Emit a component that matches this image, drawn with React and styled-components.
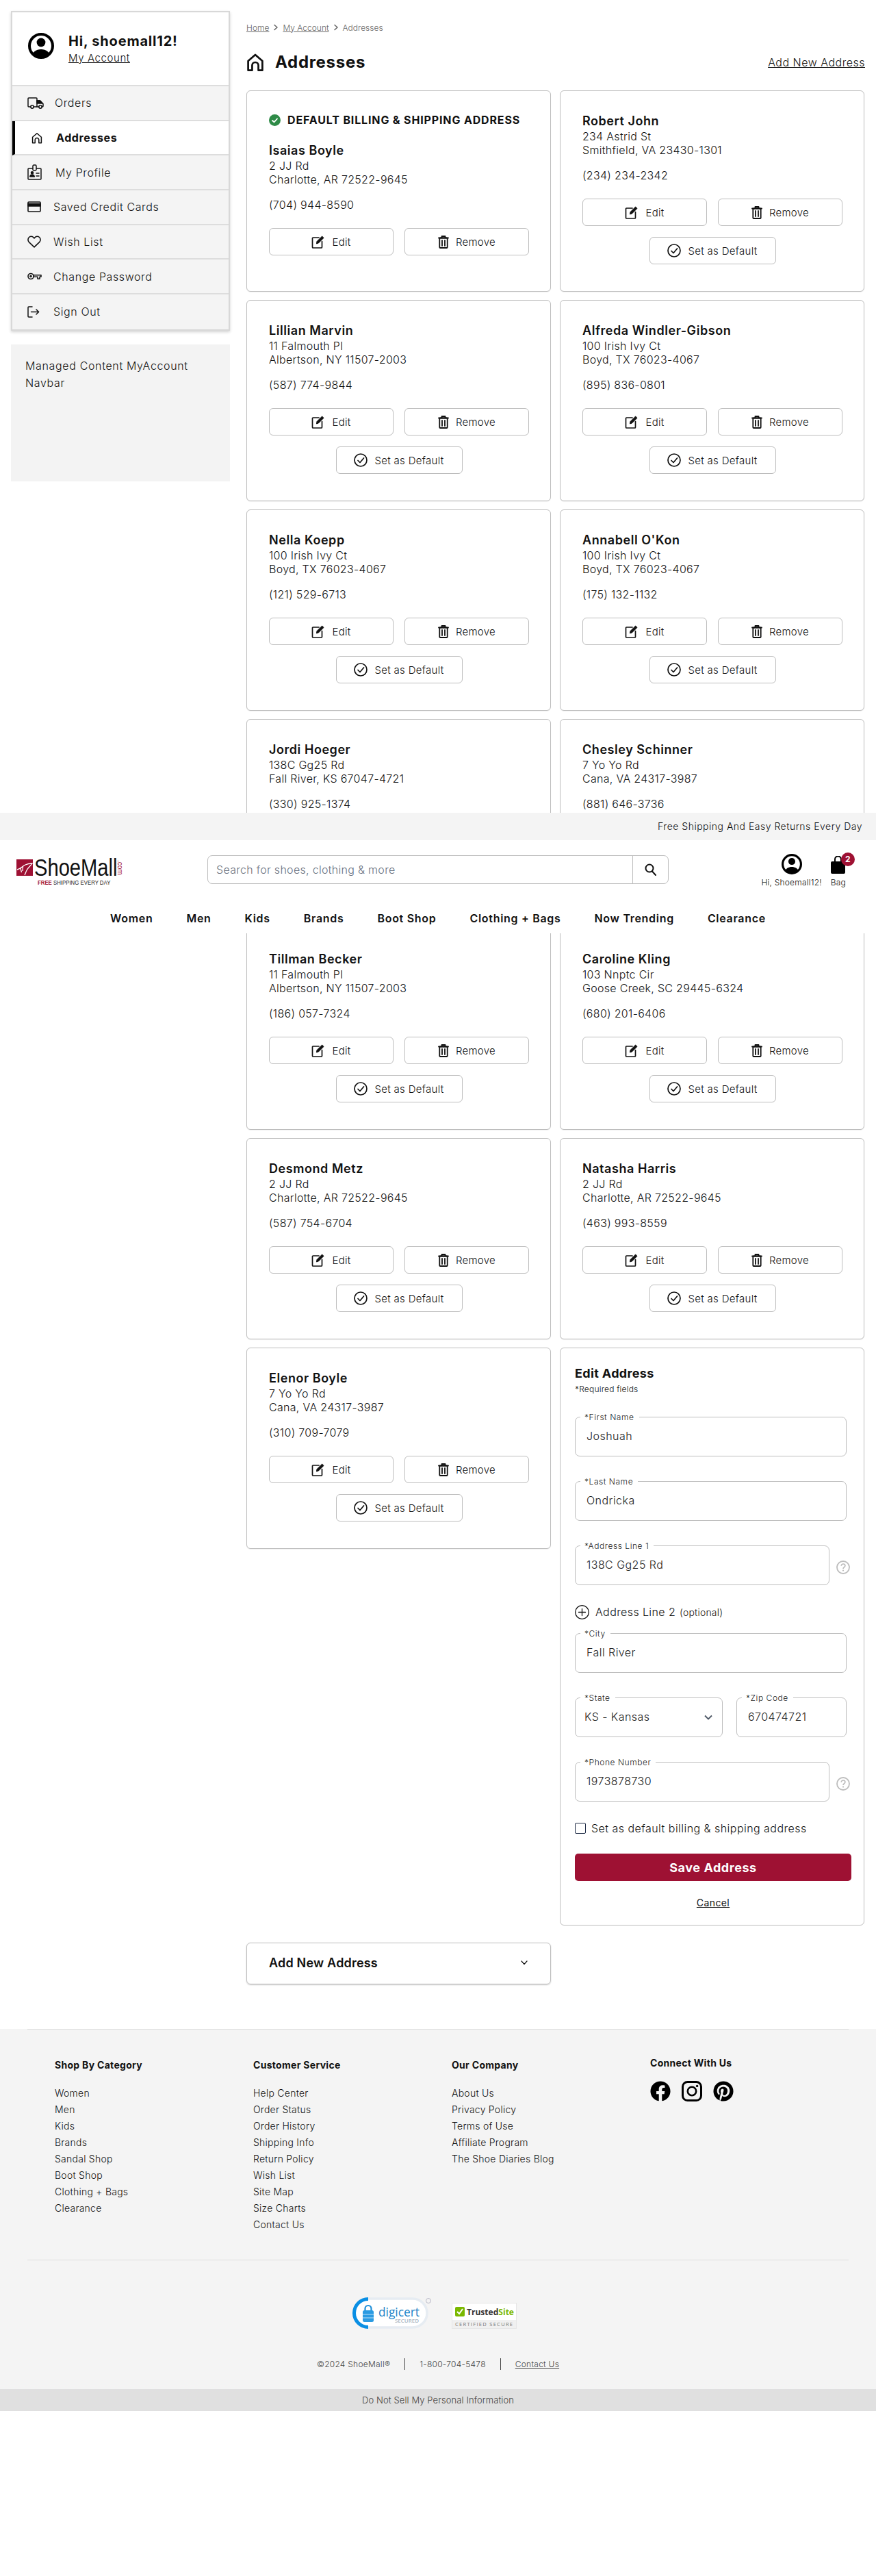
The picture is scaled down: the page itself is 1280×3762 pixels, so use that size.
import React from "react";
import styled, { createGlobalStyle } from "styled-components";
import { FaFacebook, FaPinterest } from "react-icons/fa";

const Global = createGlobalStyle`
  html, body { margin: 0; padding: 0; background: #fff; }
  body { font-family: Inter, "Liberation Sans", sans-serif; color: #111; font-size: 16px; }
  * { box-sizing: border-box; }
  a { color: inherit; }
`;

const Page = styled.div`position: relative; width: 1280px; height: 3762px; overflow: hidden;`;
const Layout = styled.div`display: flex; gap: 24px; padding: 16px 16px 0;`;
const Side = styled.aside`width: 320px; flex: none;`;
const SideBox = styled.nav`border: 2px solid #d8d8d8; box-shadow: 0 2px 4px rgba(0,0,0,.18); background: #f4f4f4;`;
const SideHead = styled.div`height: 108px; background: #fff; display: flex; align-items: flex-start; padding: 30px 0 0 23px; gap: 21px; border-bottom: 2px solid #ddd;`;
const Hello = styled.div`font-weight: 700; font-size: 20px; line-height: 24px; letter-spacing: .8px;`;
const MyLink = styled.a`display: block; font-size: 15px; line-height: 20px; margin-top: 3px; text-decoration: underline; letter-spacing: .6px; font-weight: 300;`;
const SideItem = styled.a`
  height: 50.7px; display: flex; align-items: center; border-bottom: 2px solid #ddd;
  padding-left: ${p => p.$active ? 24 : 22}px; font-size: 16px; letter-spacing: .6px;
  background: ${p => p.$active ? "#fff" : "#f4f4f4"};
  font-weight: ${p => p.$active ? 700 : 300};
  border-left: ${p => p.$active ? "4px solid #000" : "0"};
  &:last-child { border-bottom: 0; }
`;
const SideIcon = styled.span`width: ${p => p.$w}px; display: flex; flex: none;`;
const Managed = styled.div`margin-top: 20px; height: 200px; background: #f3f3f3; padding: 19px 21px; font-size: 16px; font-weight: 300; line-height: 25px; letter-spacing: .65px;`;

const Main = styled.main`flex: 1; min-width: 0;`;
const Crumbs = styled.div`display: flex; align-items: center; font-size: 12px; letter-spacing: 0; color: #666; height: 16px; margin-top: 16px; gap: 5px; font-weight: 300;`;
const CrumbLink = styled.a`text-decoration: underline;`;
const TitleRow = styled.div`display: flex; align-items: center; height: 32px; margin-top: 27px; margin-bottom: 25px;`;
const Title = styled.h1`margin: 0 0 0 16px; font-size: 24px; font-weight: 700; letter-spacing: .7px; line-height: 32px;`;
const AddLink = styled.a`margin-left: auto; font-size: 16px; font-weight: 300; text-decoration: underline; letter-spacing: .5px;`;
const Grid = styled.div`display: grid; grid-template-columns: 445px 445px; column-gap: 13px; row-gap: 12px; align-items: start;`;
const Card = styled.section`
  border: 1px solid #bdbdbd; border-radius: 6px; background: #fff; min-height: 294px;
  padding: 32px 32px 0; box-shadow: 0 1px 1px rgba(0,0,0,.06);
`;
const DefaultBanner = styled.div`display: flex; align-items: center; gap: 10px; height: 20px; margin-bottom: 23px; font-size: 16px; font-weight: 700; letter-spacing: .85px;`;
const Name = styled.div`font-size: 18px; line-height: 24px; font-weight: 600; letter-spacing: .55px;`;
const Line = styled.div`font-size: 16px; line-height: 20px; letter-spacing: .3px; font-weight: 300;`;
const Phone = styled(Line)`margin-top: 17px;`;
const Buttons = styled.div`display: flex; flex-wrap: wrap; justify-content: center; gap: 16px; width: 380px; margin-top: 24px;`;
const Btn = styled.button`
  width: ${p => p.$w || 182}px; height: 40px; background: #fff; border: 1px solid #bdbdbd; border-radius: 6px;
  display: flex; align-items: center; justify-content: center; gap: ${p => p.$gap || 10}px; font: inherit; font-size: 15px; font-weight: 300; letter-spacing: .3px; color: #111; padding: 0;
`;

const FormCard = styled.section`
  border: 1px solid #bdbdbd; border-radius: 6px; padding: 25px 19px 0 21px; height: 844px; background: #fff;
`;
const FormTitle = styled.h2`margin: 0; font-size: 18px; line-height: 24px; font-weight: 700; letter-spacing: .35px;`;
const Req = styled.div`font-size: 12px; font-weight: 300; line-height: 16px; margin-top: 3px; margin-bottom: 32px; letter-spacing: .2px;`;
const Row = styled.div`display: flex; align-items: flex-start; gap: ${p => p.$gap || 10}px; margin-bottom: ${p => p.$mb ?? 36}px;`;
const Field = styled.label`
  position: relative; display: flex; align-items: center; height: 58px; width: ${p => p.$w}px; border: 1px solid #bdbdbd; border-radius: 7px; flex: none;
`;
const Legend = styled.span`position: absolute; left: 7px; top: -8px; background: #fff; padding: 0 7px 0 6px; font-size: 12px; font-weight: 300; line-height: 16px; letter-spacing: .55px; color: #222;`;
const Input = styled.input`
  border: 0; outline: 0; background: none; width: 100%; height: 100%; padding: 0 0 3px 16px; font: inherit; font-size: 16px; font-weight: 300; letter-spacing: .45px; color: #222;
`;
const Select = styled(Input).attrs({ as: "select" })`appearance: none; -webkit-appearance: none; padding-left: 13px;`;
const Chevron = styled.svg`position: absolute; right: 14px; top: 24px; pointer-events: none;`;
const Help = styled.svg`margin-top: 22px; flex: none;`;
const AddLine = styled.div`display: flex; align-items: center; gap: 9px; height: 24px; margin: 27px 0 19px; font-size: 16px; font-weight: 300; letter-spacing: .4px; `;
const Optional = styled.span`font-size: 14px; margin-left: 1px; letter-spacing: .2px;`;
const CheckRow = styled.label`display: flex; align-items: center; gap: 8px; height: 20px; margin-top: -7px; font-size: 16px; font-weight: 300; letter-spacing: .46px;`;
const Box = styled.span`width: 16px; height: 16px; border: 1px solid #1c2a44; border-radius: 2px; flex: none;`;
const Save = styled.button`
  display: block; width: 404px; height: 40px; margin-top: 27px; background: #9e1133; color: #fff; border: 0; border-radius: 5px;
  font: inherit; font-size: 18px; font-weight: 700; letter-spacing: .55px;
`;
const Cancel = styled.a`display: block; width: 50px; margin: 22px 0 0 177px; text-align: center; font-size: 14px; line-height: 20px; letter-spacing: .4px; text-decoration: underline;`;

const AddCard = styled.section`
  grid-column: 1; margin-top: 13px; height: 61px; border: 1px solid #bdbdbd; border-radius: 6px; display: flex; align-items: center; justify-content: space-between;
  padding: 0 33px 3px 32px; font-size: 18px; font-weight: 600; letter-spacing: .2px; box-shadow: 0 1px 2px rgba(0,0,0,.2);
`;

const Sticky = styled.header`position: absolute; left: 0; right: 0; top: 1187px; height: 176px; background: #fff;`;
const Promo = styled.div`height: 40px; background: #f4f4f4; display: flex; align-items: center; justify-content: flex-end; padding: 0 20px 2px 0; font-size: 14px; font-weight: 300; letter-spacing: .5px;`;
const HeadRow = styled.div`display: flex; align-items: flex-start; height: 102px; padding: 20px 44px 0 24px;`;
const LogoWrap = styled.a`display: block; width: 155px; height: 42px; margin-top: 6px; flex: none;`;
const Search = styled.form`display: flex; width: 674px; height: 42px; margin: 2px 0 0 124px; border: 1px solid #bdbdbd; border-radius: 7px; flex: none;`;
const SearchInput = styled.input`flex: 1; border: 0; outline: 0; background: none; padding: 0 12px; font: inherit; font-size: 16px; font-weight: 300; letter-spacing: .3px; &::placeholder { color: #6b7280; opacity: 1; }`;
const SearchBtn = styled.button`width: 52px; border: 0; border-left: 1px solid #bdbdbd; background: none; display: flex; align-items: center; justify-content: center; padding: 0;`;
const Tools = styled.div`margin-left: auto; display: flex; gap: 13px;`;
const Tool = styled.a`position: relative; display: flex; flex-direction: column; align-items: center; height: 50px; justify-content: space-between; font-size: 12px; font-weight: 300; line-height: 16px; letter-spacing: .2px; white-space: nowrap;`;
const Badge = styled.span`position: absolute; top: -2px; left: 15px; width: 20px; height: 20px; border-radius: 50%; background: #9e1133; color: #fff; font-size: 12px; font-weight: 700; display: flex; align-items: center; justify-content: center;`;
const MainNav = styled.nav`display: flex; justify-content: center; gap: 49px; font-size: 16px; font-weight: 600; line-height: 24px; letter-spacing: .7px;`;

const Foot = styled.footer`margin-top: 65px; background: #f4f4f4;`;
const FootTop = styled.div`margin: 0 40px; border-top: 1px solid #ddd; border-bottom: 1px solid #ddd; padding: 42px 0 39px 40px; display: grid; grid-template-columns: repeat(4, 290px);`;
const FootHead = styled.h3`margin: ${p => p.$up ? "-3px" : 0} 0 19px; font-size: 14px; line-height: 20px; font-weight: 700; letter-spacing: .3px;`;
const FootList = styled.ul`list-style: none; margin: 0; padding: 0; font-size: 14px; font-weight: 300; line-height: 24px; letter-spacing: .25px;`;
const Social = styled.div`display: flex; gap: 16px; margin-top: -3px;`;
const Seals = styled.div`display: flex; align-items: flex-end; justify-content: center; gap: 30px; padding: 54px 10px 0 0; `;
const Legal = styled.div`display: flex; align-items: center; justify-content: center; gap: 21px; height: 17px; margin-top: 43px; font-size: 12px; font-weight: 300; color: #444; letter-spacing: .25px;`;
const Sep = styled.span`width: 1px; height: 17px; background: #444;`;
const Under = styled.a`text-decoration: underline;`;
const Band = styled.div`margin-top: 28px; height: 32px; background: #e0e0e0; display: flex; align-items: center; justify-content: center; font-size: 13px; font-weight: 300; color: #444; letter-spacing: .1px;`;

const Stroke = ({ w, h, vb, sw = 1.6, children, color = "currentColor" }) => (
  <svg width={w} height={h} viewBox={vb} fill="none" stroke={color} strokeWidth={sw} strokeLinecap="round" strokeLinejoin="round">{children}</svg>
);

const EditIcon = () => (
  <Stroke w={20} h={20} vb="0 0 20 20" sw={1.7}>
    <path d="M11 4H2.500a1 1 0 0 0-1 1v13a1 1 0 0 0 1 1h12a1 1 0 0 0 1-1V9.500" />
    <path d="M7.500 12.500l.6-3L15.600 2l2.400 2.400-7.500 7.500z" fill="currentColor" strokeWidth="1" />
  </Stroke>
);
const TrashIcon = () => (
  <Stroke w={16} h={19} vb="0 0 16 19" sw={1.8}>
    <path d="M1 3.500h14M5.500 3V1h5v2" />
    <rect x="2.300" y="3.500" width="11.400" height="14.500" rx="1" />
    <path d="M6 7v8M10 7v8" />
  </Stroke>
);
const CheckCircle = () => (
  <Stroke w={20} h={20} vb="0 0 20 20" sw={1.7}>
    <circle cx="10" cy="10" r="9" />
    <path d="M6 10.500l3 3 5.500-6.500" />
  </Stroke>
);
const GreenCheck = () => (
  <svg width="17" height="17" viewBox="0 0 17 17"><circle cx="8.500" cy="8.500" r="8.500" fill="#2e8b47" /><path d="M5 9l2.500 2.300L12 6.500" fill="none" stroke="#fff" strokeWidth="1.800" strokeLinecap="round" strokeLinejoin="round" /></svg>
);
const Avatar = ({ s }) => (
  <svg width={s} height={s} viewBox="0 0 38 38">
    <defs><clipPath id={`av${s}`}><circle cx="19" cy="19" r="17" /></clipPath></defs>
    <circle cx="19" cy="19" r="17" fill="#fff" stroke="#000" strokeWidth="4" />
    <circle cx="19" cy="14" r="6.400" fill="#000" />
    <path d="M5 38c0-9 6-14 14-14s14 5 14 14z" fill="#000" clipPath={`url(#av${s})`} />
  </svg>
);
const House = ({ w, h, sw }) => (
  <Stroke w={w} h={h} vb="0 0 20 20" sw={sw}>
    <path d="M2 19V8.500L10 1.500l8 7V19h-4.500v-5.500a3.500 3.500 0 0 0-7 0V19z" />
  </Stroke>
);
const Truck = () => (
  <Stroke w={24} h={17} vb="0 0 24 17" sw={1.5}>
    <path d="M5 14H2a1 1 0 0 1-1-1V2a1 1 0 0 1 1-1h11a1 1 0 0 1 1 1v12H9" />
    <path d="M14 5h4.500L23 9.500V13a1 1 0 0 1-1 1h-1" />
    <path d="M14 5h4.500L22 9h-8z" fill="currentColor" />
    <circle cx="7" cy="14" r="2.200" /><circle cx="19" cy="14" r="2.200" /><path d="M14 14h3" />
  </Stroke>
);
const Badge2 = () => (
  <Stroke w={21} h={23} vb="0 0 21 23" sw={1.5}>
    <path d="M7.500 6H2a1 1 0 0 0-1 1v14a1 1 0 0 0 1 1h17a1 1 0 0 0 1-1V7a1 1 0 0 0-1-1h-5.500" />
    <rect x="8" y="1" width="5" height="8" rx="1.400" />
    <circle cx="7" cy="12.300" r="1.600" fill="currentColor" />
    <path d="M3.700 18c.3-2 1.600-2.700 3.300-2.700s3 .7 3.300 2.700z" fill="currentColor" /><path d="M13 13h4M13 17h4" />
  </Stroke>
);
const CardIcon = () => (
  <Stroke w={20} h={16} vb="0 0 20 16" sw={1.6}>
    <rect x="1" y="1" width="18" height="14" rx="1" /><rect x="1" y="3.500" width="18" height="3.500" fill="currentColor" />
  </Stroke>
);
const Heart = () => (
  <Stroke w={20} h={18} vb="0 0 20 18" sw={1.6}>
    <path d="M10 16.800L2.400 9.600C.4 7.600.5 4.400 2.500 2.500c2-1.800 5-1.500 6.600.4l.9 1 .9-1c1.600-1.900 4.600-2.200 6.600-.4 2 1.900 2.100 5.100.1 7.100z" />
  </Stroke>
);
const Key = () => (
  <Stroke w={21} h={11} vb="0 0 21 11" sw={1.6}>
    <circle cx="5" cy="5.500" r="4" /><circle cx="5" cy="5.500" r="1" /><path d="M9 3.700h11v2.600h-2v3h-3v-3H9" />
  </Stroke>
);
const SignOut = () => (
  <Stroke w={18} h={17} vb="0 0 18 17" sw={1.5}>
    <path d="M7 1H2a1 1 0 0 0-1 1v13a1 1 0 0 0 1 1h5" /><path d="M5.500 8.500h11M13 5l3.600 3.500L13 12" />
  </Stroke>
);
const HelpIcon = () => (
  <Help width="20" height="20" viewBox="0 0 20 20"><circle cx="10" cy="10" r="9" fill="none" stroke="#bdbdbd" strokeWidth="1.800" /><path d="M7.200 7.800c0-1.700 1.300-2.800 2.900-2.800 1.500 0 2.800 1 2.800 2.500 0 2.200-2.900 2.200-2.900 4.400" fill="none" stroke="#bdbdbd" strokeWidth="1.700" /><circle cx="10" cy="14.600" r="1.100" fill="#bdbdbd" /></Help>
);
const Instagram = () => (
  <svg width="30" height="30" viewBox="0 0 30 30" fill="none" stroke="#000"><rect x="1.500" y="1.500" width="27" height="27" rx="7" strokeWidth="3" /><circle cx="15" cy="15" r="6.200" strokeWidth="2.600" /><circle cx="22.600" cy="7.400" r="1.700" fill="#000" stroke="none" /></svg>
);

const Logo = () => (
  <svg width="155" height="42" viewBox="0 0 155 42" style={{ overflow: "visible" }}>
    <rect x="0" y="2" width="24" height="24" fill="#9e1133" />
    <path d="M1 17c5-1 8-5 12-7 3-1.500 7-2 10-2-2 3-6 6-8 10-1 2-2 5-3 7M6 15l1.500 6M9.500 13l-.5 6" fill="none" stroke="#fff" strokeWidth="1.300" />
    <text transform="translate(26 26) scale(.81 1)" fontFamily="'Liberation Sans', sans-serif" fontSize="36" fill="#111">ShoeMall</text>
    <text transform="translate(148 3) rotate(90)" fontFamily="'Liberation Sans', sans-serif" fontSize="10" fill="#9e1133">.com</text>
    <text transform="translate(31 38.500) scale(.92 1)" fontFamily="'Liberation Sans', sans-serif" fontSize="8.500" fill="#222"><tspan fill="#9e1133" fontWeight="700">FREE</tspan> SHIPPING EVERY DAY</text>
  </svg>
);
const Digicert = () => (
  <svg width="115" height="46" viewBox="0 0 115 46">
    <rect x="3" y="2" width="106" height="42" rx="21" fill="#fff" stroke="#e6ecf2" strokeWidth="3.500" />
    <path d="M23 2.500A20.500 20.500 0 0 0 23 43.500" fill="none" stroke="#0a8fe4" strokeWidth="5" />
    <path d="M18.500 20v-3.500a4.500 4.500 0 0 1 9 0V20" fill="none" stroke="#1f8fd8" strokeWidth="2.200" />
    <rect x="15" y="19" width="16" height="17" rx="2.500" fill="#2b9be2" />
    <path d="M15 25h16M15 30h16" stroke="#bfe2f8" strokeWidth="1" />
    <text x="38" y="28" fontFamily="'Open Sans', sans-serif" fontSize="18" fill="#1b84c8" textLength="60" lengthAdjust="spacingAndGlyphs">digicert</text>
    <text x="62" y="37" fontFamily="'Open Sans', sans-serif" fontSize="7" fontWeight="600" fill="#a8b4be" textLength="35" lengthAdjust="spacingAndGlyphs">SECURED</text>
    <circle cx="111" cy="5" r="3.500" fill="#f4f4f4" stroke="#aab" strokeWidth=".8" />
  </svg>
);
const Trusted = () => (
  <svg width="95" height="38" viewBox="0 0 95 38">
    <rect x=".5" y=".5" width="94" height="37" fill="#fff" stroke="#e6e6e6" />
    <rect x="1" y="25" width="93" height="12" fill="#f0f0f0" />
    <rect x="5" y="6" width="14" height="14" rx="2" fill="#7ab800" />
    <path d="M8 13l3 3 5-7" fill="none" stroke="#fff" strokeWidth="2" />
    <text x="22" y="18" fontFamily="'Open Sans', sans-serif" fontSize="13" fontWeight="700" fill="#333" textLength="69" lengthAdjust="spacingAndGlyphs">Trusted<tspan fill="#7ab800">Site</tspan></text>
    <text x="5" y="34" fontFamily="'Open Sans', sans-serif" fontSize="7.500" fill="#777" textLength="84" lengthAdjust="spacing">CERTIFIED SECURE</text>
  </svg>
);

const addresses = [
  ["Isaias Boyle", "2 JJ Rd", "Charlotte, AR 72522-9645", "(704) 944-8590", true],
  ["Robert John", "234 Astrid St", "Smithfield, VA 23430-1301", "(234) 234-2342"],
  ["Lillian Marvin", "11 Falmouth Pl", "Albertson, NY 11507-2003", "(587) 774-9844"],
  ["Alfreda Windler-Gibson", "100 Irish Ivy Ct", "Boyd, TX 76023-4067", "(895) 836-0801"],
  ["Nella Koepp", "100 Irish Ivy Ct", "Boyd, TX 76023-4067", "(121) 529-6713"],
  ["Annabell O'Kon", "100 Irish Ivy Ct", "Boyd, TX 76023-4067", "(175) 132-1132"],
  ["Jordi Hoeger", "138C Gg25 Rd", "Fall River, KS 67047-4721", "(330) 925-1374"],
  ["Chesley Schinner", "7 Yo Yo Rd", "Cana, VA 24317-3987", "(881) 646-3736"],
  ["Tillman Becker", "11 Falmouth Pl", "Albertson, NY 11507-2003", "(186) 057-7324"],
  ["Caroline Kling", "103 Nnptc Cir", "Goose Creek, SC 29445-6324", "(680) 201-6406"],
  ["Desmond Metz", "2 JJ Rd", "Charlotte, AR 72522-9645", "(587) 754-6704"],
  ["Natasha Harris", "2 JJ Rd", "Charlotte, AR 72522-9645", "(463) 993-8559"],
  ["Elenor Boyle", "7 Yo Yo Rd", "Cana, VA 24317-3987", "(310) 709-7079"],
];

const AddressCard = ({ a }) => (
  <Card>
    {a[4] && <DefaultBanner><GreenCheck />DEFAULT BILLING &amp; SHIPPING ADDRESS</DefaultBanner>}
    <Name>{a[0]}</Name>
    <Line>{a[1]}</Line>
    <Line>{a[2]}</Line>
    <Phone>{a[3]}</Phone>
    <Buttons>
      <Btn><EditIcon />Edit</Btn>
      <Btn><TrashIcon />Remove</Btn>
      {!a[4] && <Btn $w={185}><CheckCircle />Set as Default</Btn>}
    </Buttons>
  </Card>
);

const TextField = ({ label, value, w }) => (
  <Field $w={w}><Legend>{label}</Legend><Input readOnly value={value} /></Field>
);

const sideItems = [
  [<Truck />, "Orders", 40],
  [<House w={16} h={17} sw={1.9} />, "Addresses", 36, true],
  [<Badge2 />, "My Profile", 41],
  [<CardIcon />, "Saved Credit Cards", 38],
  [<Heart />, "Wish List", 38],
  [<Key />, "Change Password", 38],
  [<SignOut />, "Sign Out", 38],
];

const footerCols = [
  ["Shop By Category", ["Women", "Men", "Kids", "Brands", "Sandal Shop", "Boot Shop", "Clothing + Bags", "Clearance"]],
  ["Customer Service", ["Help Center", "Order Status", "Order History", "Shipping Info", "Return Policy", "Wish List", "Site Map", "Size Charts", "Contact Us"]],
  ["Our Company", ["About Us", "Privacy Policy", "Terms of Use", "Affiliate Program", "The Shoe Diaries Blog"]],
];

export default function App() {
  return (
    <Page>
      <Global />
      <Layout>
        <Side>
          <SideBox>
            <SideHead>
              <Avatar s={38} />
              <div><Hello>Hi, shoemall12!</Hello><MyLink>My Account</MyLink></div>
            </SideHead>
            {sideItems.map(([ic, t, w, act]) => (
              <SideItem key={t} $active={act}><SideIcon $w={w}>{ic}</SideIcon>{t}</SideItem>
            ))}
          </SideBox>
          <Managed>Managed Content MyAccount Navbar</Managed>
        </Side>
        <Main>
          <Crumbs>
            <CrumbLink>Home</CrumbLink>
            <Stroke w={10} h={10} vb="0 0 10 10"><path d="M3 1.500L7 5 3 8.500" /></Stroke>
            <CrumbLink>My Account</CrumbLink>
            <Stroke w={10} h={10} vb="0 0 10 10"><path d="M3 1.500L7 5 3 8.500" /></Stroke>
            <span>Addresses</span>
          </Crumbs>
          <TitleRow>
            <House w={26} h={28} sw={2.100} />
            <Title>Addresses</Title>
            <AddLink>Add New Address</AddLink>
          </TitleRow>
          <Grid>
            {addresses.map(a => <AddressCard key={a[0]} a={a} />)}
            <FormCard>
              <FormTitle>Edit Address</FormTitle>
              <Req>*Required fields</Req>
              <Row><TextField label="*First Name" value="Joshuah" w={397} /></Row>
              <Row><TextField label="*Last Name" value="Ondricka" w={397} /></Row>
              <Row $mb={0}><TextField label="*Address Line 1" value="138C Gg25 Rd" w={372} /><HelpIcon /></Row>
              <AddLine>
                <Stroke w={21} h={21} vb="0 0 21 21" sw={1.300}><circle cx="10.500" cy="10.500" r="9.800" /><path d="M10.500 5.500v10M5.500 10.500h10" /></Stroke>
                <span>Address Line 2 <Optional>(optional)</Optional></span>
              </AddLine>
              <Row><TextField label="*City" value="Fall River" w={397} /></Row>
              <Row $gap={20}>
                <Field $w={216}>
                  <Legend>*State</Legend>
                  <Select defaultValue="KS"><option value="KS">KS - Kansas</option></Select>
                  <Chevron width="12" height="8" viewBox="0 0 12 8" fill="none" stroke="#4b5563" strokeWidth="1.800"><path d="M1 1.500l5 5 5-5" /></Chevron>
                </Field>
                <TextField label="*Zip Code" value="670474721" w={161} />
              </Row>
              <Row><TextField label="*Phone Number" value="1973878730" w={372} /><HelpIcon /></Row>
              <CheckRow><Box />Set as default billing &amp; shipping address</CheckRow>
              <Save>Save Address</Save>
              <Cancel>Cancel</Cancel>
            </FormCard>
            <AddCard>
              Add New Address
              <Stroke w={10} h={7} vb="0 0 10 7" sw={1.200}><path d="M1 1l4 4.500L9 1" /></Stroke>
            </AddCard>
          </Grid>
        </Main>
      </Layout>
      <Foot>
        <FootTop>
          {footerCols.map(([h, links]) => (
            <div key={h}>
              <FootHead>{h}</FootHead>
              <FootList>{links.map(l => <li key={l}>{l}</li>)}</FootList>
            </div>
          ))}
          <div>
            <FootHead $up>Connect With Us</FootHead>
            <Social><FaFacebook size={30} color="#000" /><Instagram /><FaPinterest size={30} color="#000" /></Social>
          </div>
        </FootTop>
        <Seals><Digicert /><Trusted /></Seals>
        <Legal><span>©2024 ShoeMall®</span><Sep /><span>1-800-704-5478</span><Sep /><Under>Contact Us</Under></Legal>
        <Band>Do Not Sell My Personal Information</Band>
      </Foot>
      <Sticky>
        <Promo>Free Shipping And Easy Returns Every Day</Promo>
        <HeadRow>
          <LogoWrap><Logo /></LogoWrap>
          <Search>
            <SearchInput placeholder="Search for shoes, clothing & more" />
            <SearchBtn type="button"><Stroke w={20} h={20} vb="0 0 20 20" sw={2} color="#111"><circle cx="8" cy="8" r="5.500" /><path d="M12 12.500l5 5.500" /></Stroke></SearchBtn>
          </Search>
          <Tools>
            <Tool><Avatar s={30} /><span>Hi, Shoemall12!</span></Tool>
            <Tool>
              <svg width="21" height="26" viewBox="0 0 21 26" style={{ marginTop: 3 }}><path d="M6 8V5a4.500 4.500 0 0 1 9 0v3" fill="none" stroke="#000" strokeWidth="2" /><path d="M2 8h17a2 2 0 0 1 2 2v14a2 2 0 0 1-2 2H2a2 2 0 0 1-2-2V10a2 2 0 0 1 2-2z" fill="#000" /></svg>
              <span>Bag</span>
              <Badge>2</Badge>
            </Tool>
          </Tools>
        </HeadRow>
        <MainNav>
          {["Women", "Men", "Kids", "Brands", "Boot Shop", "Clothing + Bags", "Now Trending", "Clearance"].map(n => <span key={n}>{n}</span>)}
        </MainNav>
      </Sticky>
    </Page>
  );
}
